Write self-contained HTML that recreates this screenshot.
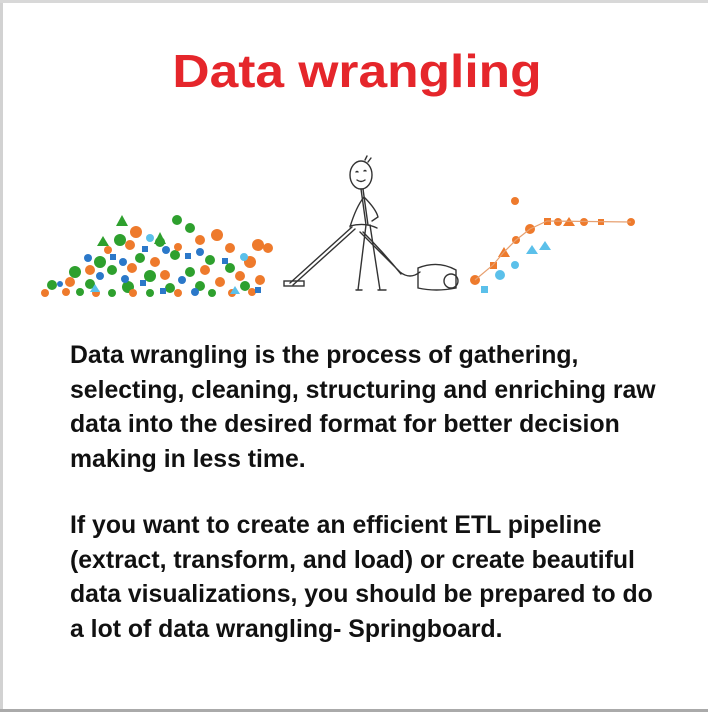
<!DOCTYPE html>
<html><head><meta charset="utf-8"><style>
html,body{margin:0;padding:0;background:#fff;}
.page{position:relative;width:708px;height:712px;overflow:hidden;background:#fff;font-family:"Liberation Sans",Arial,sans-serif;}
.bl{position:absolute;left:0;top:0;width:3px;height:712px;background:#d2d2d2;}
.bt{position:absolute;left:0;top:0;width:708px;height:3px;background:#d8d8d8;}
.bb{position:absolute;left:0;top:709px;width:708px;height:3px;background:#aaa;}
h1{position:absolute;left:0;width:714px;top:41px;margin:0;text-align:center;color:#e5262b;font-size:46px;font-weight:bold;line-height:60px;transform:scaleX(1.12);transform-origin:357px 0;}
.p{position:absolute;left:70px;width:630px;margin:0;font-size:24.8px;font-weight:bold;color:#111;line-height:34.5px;white-space:nowrap;}
svg{position:absolute;left:0;top:0;}
</style></head><body><div class="page">
<div class="bl"></div><div class="bt"></div><div class="bb"></div>
<h1>Data wrangling</h1>
<svg width="708" height="320" viewBox="0 0 708 320">
<g fill="#2ea02e">
<polygon points="122,215 116,226 128,226"/><circle cx="177" cy="220" r="5"/><circle cx="190" cy="228" r="5"/>
<polygon points="103,236 97,246 109,246"/><circle cx="120" cy="240" r="6"/><circle cx="160" cy="242" r="5"/><polygon points="160,232 154,244 166,244"/>
<circle cx="100" cy="262" r="6"/><circle cx="140" cy="258" r="5"/><circle cx="175" cy="255" r="5"/><circle cx="210" cy="260" r="5"/>
<circle cx="75" cy="272" r="6"/><circle cx="112" cy="270" r="5"/><circle cx="150" cy="276" r="6"/><circle cx="190" cy="272" r="5"/><circle cx="230" cy="268" r="5"/>
<circle cx="52" cy="285" r="5"/><circle cx="90" cy="284" r="5"/><circle cx="128" cy="287" r="6"/><circle cx="170" cy="288" r="5"/><circle cx="200" cy="286" r="5"/><circle cx="245" cy="286" r="5"/>
<circle cx="80" cy="292" r="4"/><circle cx="112" cy="293" r="4"/><circle cx="150" cy="293" r="4"/><circle cx="212" cy="293" r="4"/>
</g>
<g fill="#ee7a2c">
<circle cx="136" cy="232" r="6"/><circle cx="200" cy="240" r="5"/><circle cx="217" cy="235" r="6"/><circle cx="230" cy="248" r="5"/><circle cx="258" cy="245" r="6"/><circle cx="268" cy="248" r="5"/>
<circle cx="130" cy="245" r="5"/><circle cx="108" cy="250" r="4"/><circle cx="178" cy="247" r="4"/><circle cx="155" cy="262" r="5"/><circle cx="250" cy="262" r="6"/>
<circle cx="90" cy="270" r="5"/><circle cx="132" cy="268" r="5"/><circle cx="205" cy="270" r="5"/><circle cx="240" cy="276" r="5"/><circle cx="260" cy="280" r="5"/>
<circle cx="45" cy="293" r="4"/><circle cx="66" cy="292" r="4"/><circle cx="96" cy="293" r="4"/><circle cx="133" cy="293" r="4"/><circle cx="178" cy="293" r="4"/><circle cx="232" cy="293" r="4"/><circle cx="252" cy="292" r="4"/>
<circle cx="165" cy="275" r="5"/><circle cx="220" cy="282" r="5"/><circle cx="70" cy="282" r="5"/>
</g>
<g fill="#2b78c9">
<rect x="110" y="254" width="6" height="6"/><circle cx="88" cy="258" r="4"/><circle cx="123" cy="262" r="4"/><rect x="142" y="246" width="6" height="6"/><circle cx="166" cy="250" r="4"/><rect x="185" y="253" width="6" height="6"/><circle cx="200" cy="252" r="4"/>
<circle cx="100" cy="276" r="4"/><rect x="140" y="280" width="6" height="6"/><circle cx="182" cy="280" r="4"/><rect x="222" y="258" width="6" height="6"/><rect x="255" y="287" width="6" height="6"/>
<circle cx="60" cy="284" r="3"/><rect x="160" y="288" width="6" height="6"/><circle cx="195" cy="292" r="4"/><circle cx="125" cy="279" r="4"/>
</g>
<g fill="#5bc0ea"><polygon points="95,284 90,292 100,292"/><circle cx="150" cy="238" r="4"/><polygon points="235,286 230,294 240,294"/><circle cx="244" cy="257" r="4"/></g>
<g fill="#ee7a2c">
<circle cx="515" cy="201" r="4"/><rect x="544" y="218" width="7" height="7"/><circle cx="558" cy="222" r="4"/><polygon points="569,217 563,226 575,226"/><circle cx="584" cy="222" r="4"/><rect x="598" y="219" width="6" height="6"/><circle cx="631" cy="222" r="4"/>
<circle cx="530" cy="229" r="5"/><circle cx="516" cy="240" r="4"/><polygon points="504,247 498,257 510,257"/><rect x="490" y="262" width="7" height="7"/><circle cx="475" cy="280" r="5"/>
</g>
<polyline points="475,280 493,265 504,252 516,240 530,229 547,221 631,222" fill="none" stroke="#e7a070" stroke-width="1.2"/>
<g fill="#5bc0ea"><polygon points="532,245 526,254 538,254"/><polygon points="545,241 539,250 551,250"/><circle cx="515" cy="265" r="4"/><circle cx="500" cy="275" r="5"/><rect x="481" y="286" width="7" height="7"/></g>
<g fill="none" stroke="#333" stroke-width="1.4" stroke-linecap="round">
<ellipse cx="361" cy="175" rx="11" ry="14"/>
<path d="M356 172 q1 -1 2 0 M364 171 q1 -1 2 0 M357 180 q4 3 8 0"/>
<path d="M365 160 l2 -4 M368 162 l3 -4"/>
<path d="M361 189 L366 225 M363 189 L368 225"/>
<path d="M364 197 q12 12 14 20 l-6 4 M364 197 q-8 10 -14 30"/>
<path d="M352 227 L290 283 M355 229 L293 285"/>
<rect x="284" y="281" width="20" height="5"/>
<path d="M350 226 q15 -4 27 2"/>
<path d="M366 225 l-8 65 M370 225 l10 65 M356 290 l6 0 M378 290 l8 0"/>
<path d="M360 232 q20 20 40 40 q10 8 20 0 M363 232 q20 20 38 42"/>
<path d="M418 268 q20 -8 38 2 l0 18 q-20 4 -38 0 z"/>
<circle cx="451" cy="281" r="7"/>
</g>
</svg>
<p class="p" style="top:339px">Data wrangling is the process of gathering,<br>selecting, cleaning, structuring and enriching raw<br>data into the desired format for better decision<br>making in less time.</p>
<p class="p" style="top:509px">If you want to create an efficient ETL pipeline<br>(extract, transform, and load) or create beautiful<br>data visualizations, you should be prepared to do<br>a lot of data wrangling- Springboard.</p>
</div></body></html>
